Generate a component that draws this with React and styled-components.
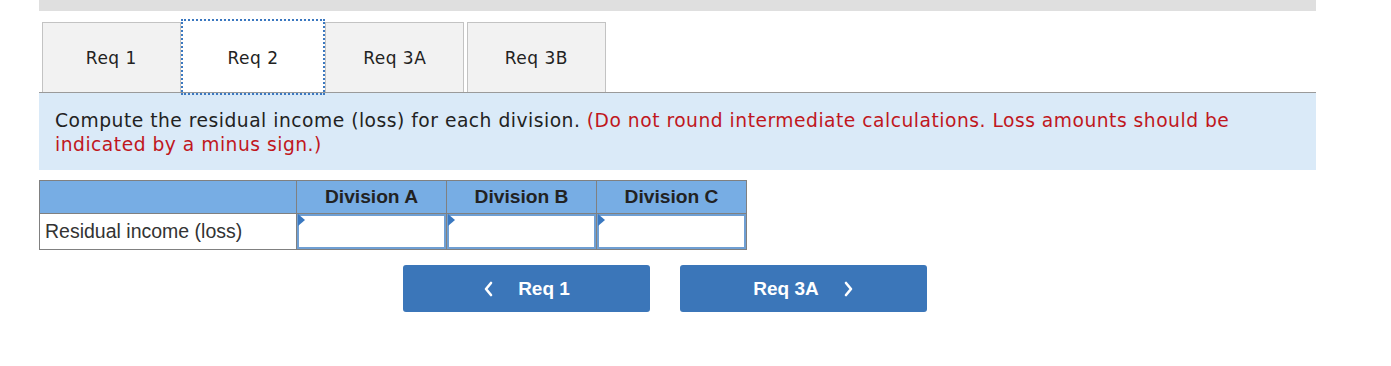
import React from "react";
import styled, { createGlobalStyle } from "styled-components";

const Global = createGlobalStyle`
  html, body { margin: 0; padding: 0; background: #fff; }
  body { font-family: "DejaVu Sans", Verdana, sans-serif; }
`;

const Page = styled.div`
  margin-left: 39px;
  width: 1277px;
`;

const TopBar = styled.div`
  height: 11px;
  background: #dfdfdf;
`;

const TabStrip = styled.div`
  display: flex;
  gap: 3px;
  margin-top: 11px;
  padding-left: 3px;
  border-bottom: 1px solid #9a9a9a;
`;

const Tab = styled.button`
  width: 138.7px;
  height: 70px;
  box-sizing: border-box;
  margin: 0;
  padding: 0;
  font-family: "DejaVu Sans", Verdana, sans-serif;
  font-size: 17px;
  letter-spacing: 0.5px;
  color: #222;
  cursor: pointer;
  background: ${(p) => (p.$active ? "#fff" : "#f2f2f2")};
  border: 1px solid ${(p) => (p.$active ? "#fff" : "#c3c3c3")};
  border-bottom: none;
  outline: ${(p) => (p.$active ? "2px dotted #3b78c0" : "none")};
  outline-offset: 1px;
  position: relative;
  z-index: ${(p) => (p.$active ? 1 : 0)};
`;

const Instructions = styled.div`
  background: #daeaf8;
  padding: 16px 16px 13px;
  font-size: 18.7px;
  letter-spacing: 0.5px;
  line-height: 24px;
  color: #222;
`;

const Red = styled.span`
  color: #c0171d;
`;

const Table = styled.table`
  margin-top: 10px;
  border-collapse: collapse;
  font-family: "Liberation Sans", Arial, sans-serif;
`;

const Th = styled.th`
  background: #77ade4;
  border: 1px solid #808080;
  height: 32px;
  padding: 0;
  width: ${(p) => p.$w}px;
  font-size: 19.2px;
  font-weight: bold;
  color: #222;
  text-align: center;
`;

const LabelCell = styled.td`
  border: 1px solid #808080;
  height: 35px;
  padding: 0 0 0 5px;
  font-size: 19.5px;
  color: #333;
`;

const InputCell = styled.td`
  border: 1px solid #808080;
  padding: 0;
  height: 35px;
`;

const InputBox = styled.div`
  box-sizing: border-box;
  height: 35px;
  border: 2px solid #6f9fd3;
  background: #fff;
  position: relative;
`;

const Marker = styled.span`
  position: absolute;
  left: -1px;
  top: -2px;
  width: 0;
  height: 0;
  border-top: 6px solid transparent;
  border-bottom: 6px solid transparent;
  border-left: 7px solid #3a78c0;
`;

const NavRow = styled.div`
  display: flex;
  gap: 30px;
  margin-top: 15px;
  padding-left: 364px;
`;

const NavButton = styled.button`
  width: 247px;
  height: 47px;
  box-sizing: border-box;
  border: none;
  border-radius: 3px;
  background: #3b76b9;
  color: #fff;
  font-family: "Liberation Sans", Arial, sans-serif;
  font-weight: bold;
  font-size: 19px;
  display: flex;
  align-items: center;
  justify-content: center;
  gap: 24px;
  cursor: pointer;
  padding: 0;
`;

const Chevron = ({ dir }) => (
  <svg width="11" height="16" viewBox="0 0 11 16" aria-hidden="true">
    <polyline
      points={dir === "left" ? "8,2 3,8 8,14" : "3,2 8,8 3,14"}
      fill="none"
      stroke="#fff"
      strokeWidth="2.6"
      strokeLinecap="round"
      strokeLinejoin="round"
    />
  </svg>
);

const tabs = ["Req 1", "Req 2", "Req 3A", "Req 3B"];

export default function App() {
  return (
    <>
      <Global />
      <Page>
        <TopBar />
        <TabStrip>
          {tabs.map((t) => (
            <Tab key={t} $active={t === "Req 2"}>
              {t}
            </Tab>
          ))}
        </TabStrip>
        <Instructions>
          Compute the residual income (loss) for each division.{" "}
          <Red>
            (Do not round intermediate calculations. Loss amounts should be
            indicated by a minus sign.)
          </Red>
        </Instructions>
        <Table>
          <thead>
            <tr>
              <Th $w={256} />
              <Th $w={149}>Division A</Th>
              <Th $w={149}>Division B</Th>
              <Th $w={149}>Division C</Th>
            </tr>
          </thead>
          <tbody>
            <tr>
              <LabelCell>Residual income (loss)</LabelCell>
              {["A", "B", "C"].map((d) => (
                <InputCell key={d}>
                  <InputBox>
                    <Marker />
                  </InputBox>
                </InputCell>
              ))}
            </tr>
          </tbody>
        </Table>
        <NavRow>
          <NavButton>
            <Chevron dir="left" />
            <span>Req 1</span>
          </NavButton>
          <NavButton>
            <span>Req 3A</span>
            <Chevron dir="right" />
          </NavButton>
        </NavRow>
      </Page>
    </>
  );
}
